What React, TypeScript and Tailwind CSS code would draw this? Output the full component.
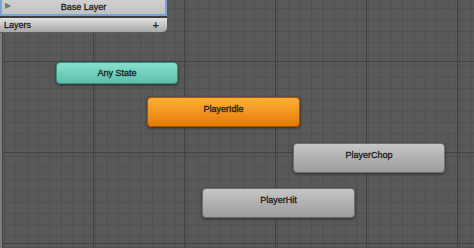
import React from "react";

type StateNode = {
  name: string;
  x: number;
  y: number;
  w: number;
  h: number;
  tone: "teal" | "orange" | "gray";
};

const nodes: StateNode[] = [
  { name: "Any State", x: 56, y: 62, w: 122, h: 22, tone: "teal" },
  { name: "PlayerIdle", x: 147, y: 97, w: 153, h: 30, tone: "orange" },
  { name: "PlayerChop", x: 293, y: 143, w: 152, h: 30, tone: "gray" },
  { name: "PlayerHit", x: 202, y: 188, w: 153, h: 30, tone: "gray" },
];

const toneClass = {
  teal: "bg-gradient-to-b from-[#86e0cd] to-[#5dbfab] border-[#3f8f80]",
  orange: "bg-gradient-to-b from-[#fbb035] to-[#e67a02] border-[#a45600]",
  gray: "bg-gradient-to-b from-[#c6c6c6] to-[#9c9c9c] border-[#6e6e6e]",
};

const GridCanvas = () => (
  <svg className="absolute inset-0" width="474" height="248">
    <defs>
      <pattern id="minor" x="2" y="-30" width="11.375" height="11.375" patternUnits="userSpaceOnUse">
        <path d="M0 0.5 H11.375 M0.5 0 V11.375" stroke="#505050" strokeWidth="1" fill="none" />
      </pattern>
      <pattern id="major" x="2" y="-30" width="91" height="91" patternUnits="userSpaceOnUse">
        <rect width="91" height="91" fill="url(#minor)" />
        <path d="M0 0.5 H91 M0.5 0 V91" stroke="#424242" strokeWidth="1" fill="none" />
      </pattern>
    </defs>
    <rect width="474" height="248" fill="#595959" />
    <rect width="474" height="248" fill="url(#major)" />
    <rect x="0" y="0" width="2" height="248" fill="#7d7d7d" />
  </svg>
);

export default function App() {
  return (
    <div
      className="relative w-[474px] h-[248px] overflow-hidden bg-[#595959]"
      style={{ fontFamily: '"Liberation Sans", Arial, sans-serif' }}
    >
      <GridCanvas />

      {/* layer panel */}
      <div className="absolute left-0 top-0 w-[167px] flex flex-col">
        <div className="relative h-[16px] flex items-center justify-center bg-gradient-to-b from-[#d0d0d0] to-[#c2c2c2] border-2 border-t-0 border-[#79a4da]">
          <span className="absolute left-[3px] top-[2px] text-[8px] leading-none text-[#7a7a7a]">▶</span>
          <span className="text-[9px] leading-none text-[#1c1c1c] [-webkit-text-stroke:0.3px_#1c1c1c]">Base Layer</span>
        </div>
        <div className="h-[2px] bg-[#3e3e3e]" />
        <div className="h-[15px] flex items-center justify-between pl-[4px] pr-[8px] bg-gradient-to-b from-[#e2e2e2] to-[#a8a8a8] rounded-br-[5px] border-b border-[#5e5e5e]">
          <span className="text-[9px] leading-none text-[#1c1c1c] [-webkit-text-stroke:0.3px_#1c1c1c]">Layers</span>
          <span className="text-[11px] leading-none font-bold text-[#2a2a2a]">+</span>
        </div>
      </div>

      {nodes.map((n) => (
        <div
          key={n.name}
          className={`absolute flex justify-center rounded-[4px] border shadow-[0_1px_3px_rgba(0,0,0,0.55)] ${toneClass[n.tone]}`}
          style={{ left: n.x, top: n.y, width: n.w, height: n.h, paddingTop: n.h > 24 ? 6 : 5 }}
        >
          <span className="text-[9px] leading-[10px] text-[#1a1a1a] [-webkit-text-stroke:0.3px_#1a1a1a]">{n.name}</span>
        </div>
      ))}
    </div>
  );
}
